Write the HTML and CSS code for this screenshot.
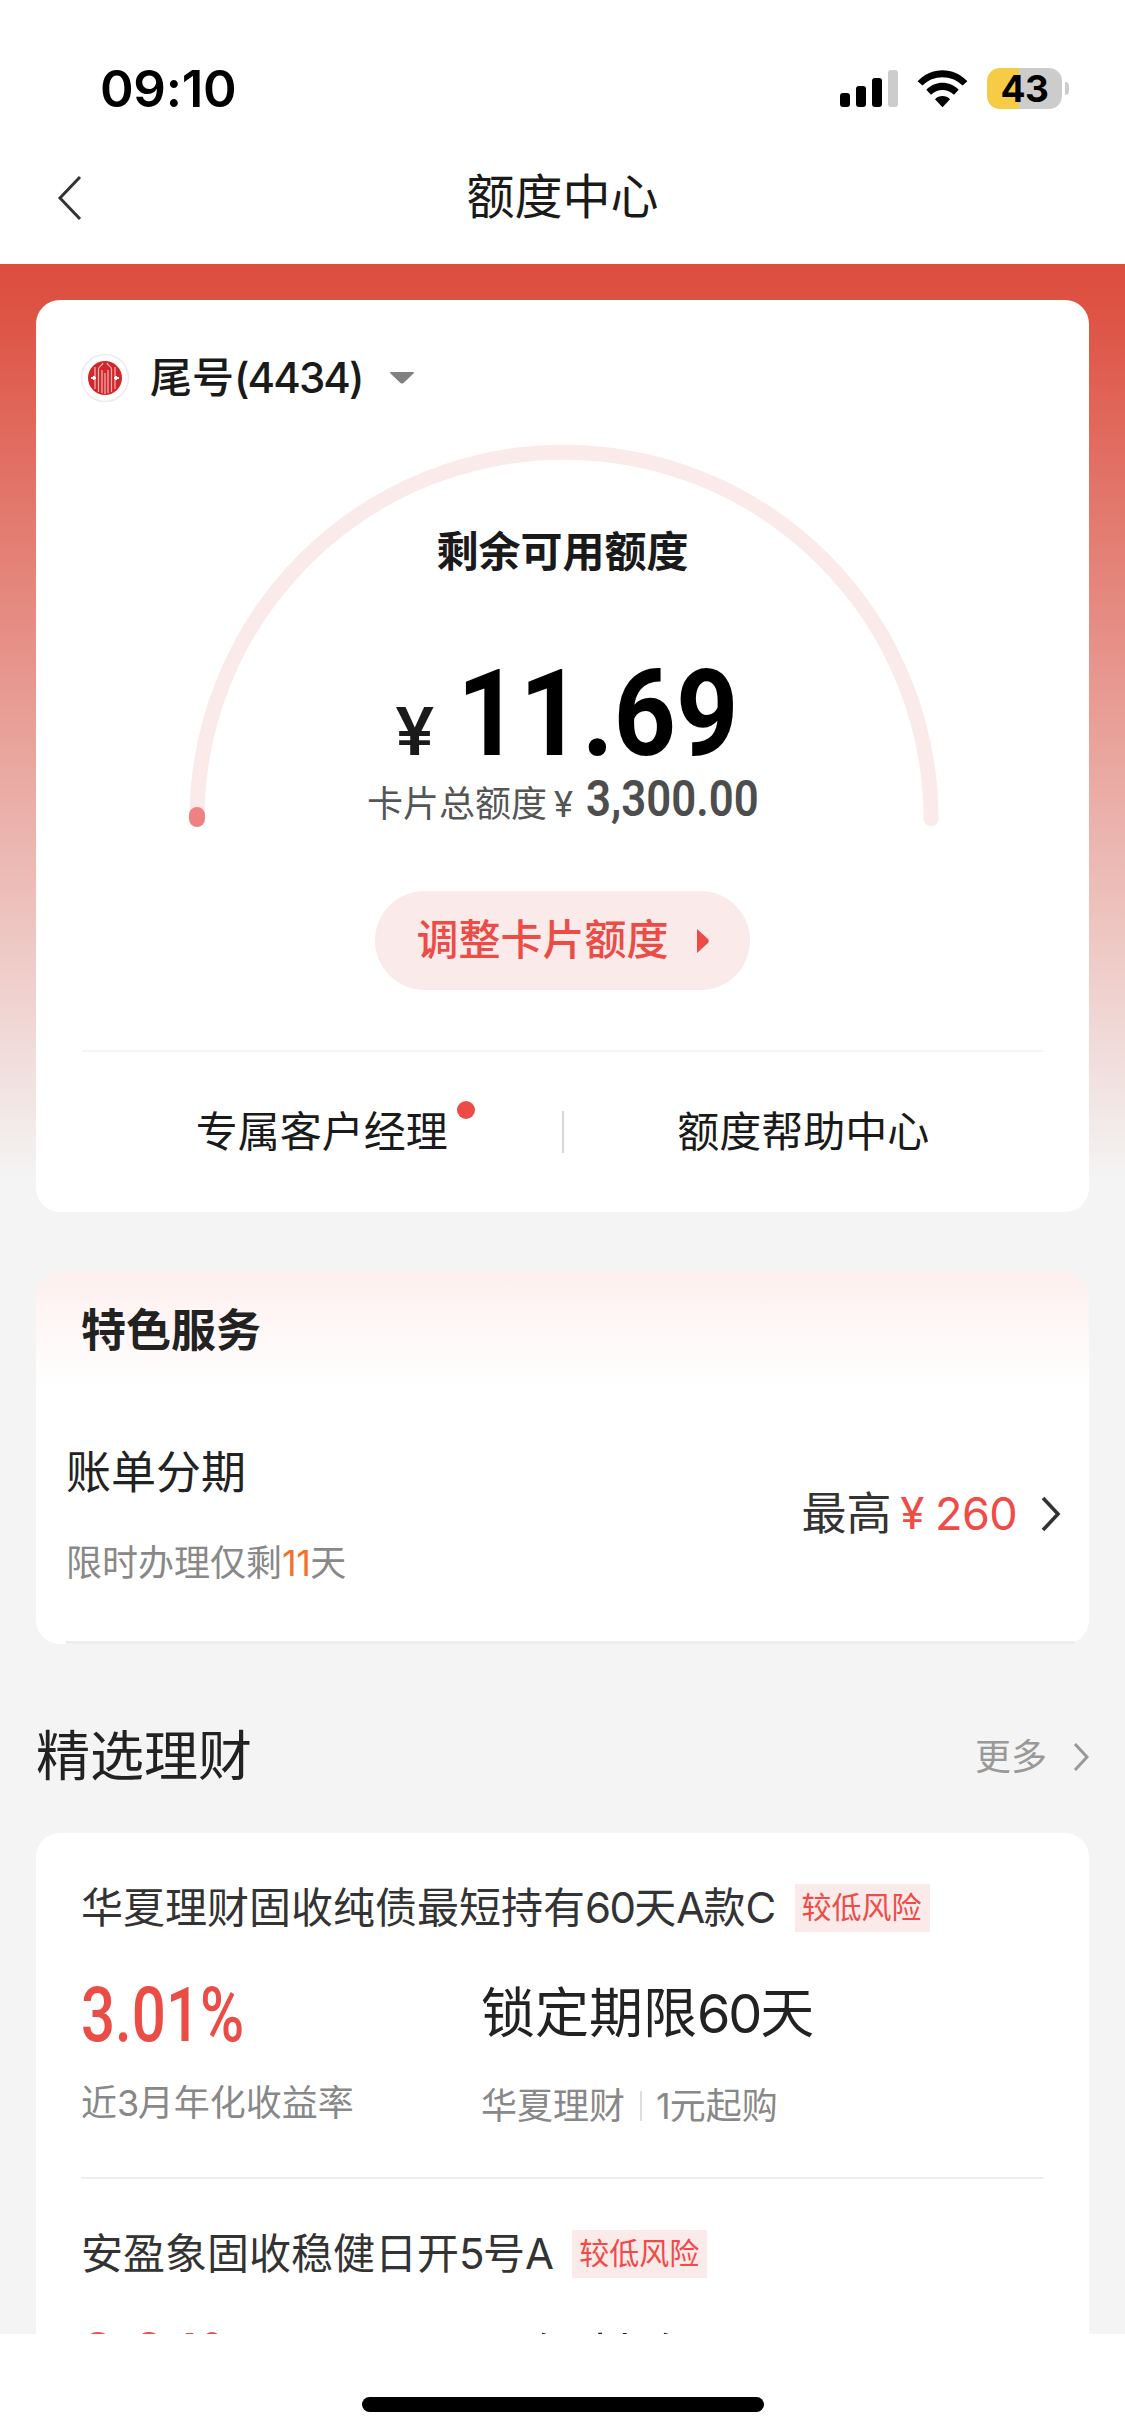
FILE: index.html
```html
<!DOCTYPE html>
<html lang="zh-CN">
<head>
<meta charset="utf-8">
<title>额度中心</title>
<link rel="stylesheet" href="styles.css">
</head>
<body>
<div class="app">
  <div class="status">
    <span class="time">09:10</span>
    <div class="status-icons">
      <svg class="signal" width="58" height="37" viewBox="0 0 58 37">
        <rect x="0" y="23" width="10" height="14" rx="3"/>
        <rect x="16" y="16" width="10" height="21" rx="3"/>
        <rect x="32" y="8" width="10" height="29" rx="3"/>
        <rect x="48" y="0" width="10" height="37" rx="3" fill="#ccc"/>
      </svg>
      <svg class="wifi" width="51" height="38" viewBox="0 0 51 38">
        <path d="M.6 11.2C14.5-3.4 36.500-3.400 50.400 11.200L45.600 15.600C34.500 4.300 16.500 4.300 5.400 15.600Z"/>
        <path d="M9.300 19.800C18.500 10.500 32.500 10.500 41.700 19.800L37 24.800C30.500 18.300 20.500 18.300 14 24.800Z"/>
        <path d="M18 29.200C22 24.800 29 24.800 33 29.200L25.500 37.200Z"/>
      </svg>
      <div class="battery">
        <div class="battery-body">43</div>
        <div class="battery-nub"></div>
      </div>
    </div>
  </div>

  <header class="nav">
    <svg class="back" width="26" height="46" viewBox="0 0 26 46"><path d="M23 2L3 23L23 44" fill="none" stroke="#333" stroke-width="3"/></svg>
    <h1>额度中心</h1>
  </header>

  <main class="page">
    <section class="card quota">
      <div class="account">
        <svg class="bank" width="50" height="50" viewBox="0 0 50 50">
          <circle cx="25" cy="25" r="23.500" fill="#fff" stroke="#ececec" stroke-width="1.500"/>
          <circle cx="25" cy="25" r="17" fill="#d3262b"/>
          <g fill="none" stroke="#f3b5b5" stroke-width="1.200">
            <path d="M18.500 39V16C18.500 13.500 22 13 23 10M31.500 39V16C31.500 13.500 28 13 27 10"/>
            <path d="M22 40V17M28 40V17M25 20V41"/>
            <path d="M15 14V36M35 14V36"/>
          </g>
          <path d="M14 23V27M16 25H11M36 23V27M34 25H39" stroke="#fff" stroke-width="2" fill="none"/>
        </svg>
        <span class="account-name">尾号<span class="account-num">(4434)</span></span>
        <svg class="caret" width="24" height="12" viewBox="0 0 24 12"><path d="M1 0H23Q25 0 23 2L13.500 11Q12 12 10.500 11L1 2Q-1 0 1 0Z" fill="#808080"/></svg>
      </div>

      <div class="gauge">
        <svg class="arc" width="752" height="384" viewBox="0 0 752 384">
          <path d="M9 376A367 367 0 0 1 743 376" fill="none" stroke="#fbeaea" stroke-width="15" stroke-linecap="round"/>
          <rect x="1" y="364" width="16" height="20" rx="8" fill="#ee8283"/>
        </svg>
        <div class="gauge-title">剩余可用额度</div>
        <div class="amount"><span class="yen">¥</span><span class="digits">11.69</span></div>
        <div class="total"><span>卡片总额度</span><span class="total-yen">¥</span><span class="total-num">3,300.00</span></div>
      </div>

      <button class="adjust">调整卡片额度<svg width="12" height="26" viewBox="0 0 12 26"><path d="M0 1L11 11Q12.500 13 11 15L0 25Z" fill="#eb4c46"/></svg></button>

      <div class="links">
        <div class="link"><span class="link-text">专属客户经理<i class="dot"></i></span></div>
        <i class="sep"></i>
        <div class="link"><span class="link-text">额度帮助中心</span></div>
      </div>
    </section>

    <section class="card service">
      <h2>特色服务</h2>
      <div class="bill">
        <div>
          <div class="bill-name">账单分期</div>
          <div class="bill-note">限时办理仅剩<span class="days">11</span>天</div>
        </div>
        <div class="bill-max">最高<span class="bill-yen">¥</span><span class="bill-num">260</span>
          <svg width="20" height="36" viewBox="0 0 20 36"><path d="M2 2L17 18L2 34" fill="none" stroke="#333" stroke-width="3.600"/></svg>
        </div>
      </div>
    </section>

    <div class="section-head">
      <h3>精选理财</h3>
      <div class="more">更多<svg width="17" height="32" viewBox="0 0 17 32"><path d="M3 3L15 16L3 29" fill="none" stroke="#999" stroke-width="3"/></svg></div>
    </div>

    <section class="card products">
      <article class="product">
        <div class="product-head"><span>华夏理财固收纯债最短持有<span class="num">60</span>天<span class="num">A</span>款<span class="num">C</span></span><em class="tag">较低风险</em></div>
        <div class="product-body">
          <div class="rate-col">
            <div class="rate"><span>3.01%</span></div>
            <div class="sub">近<span class="num">3</span>月年化收益率</div>
          </div>
          <div class="term-col">
            <div class="term">锁定期限<span class="num">60</span>天</div>
            <div class="sub sub-pair">华夏理财<i></i><span><span class="one">1</span>元起购</span></div>
          </div>
        </div>
      </article>
      <article class="product">
        <div class="product-head"><span>安盈象固收稳健日开<span class="num">5</span>号<span class="num">A</span></span><em class="tag">较低风险</em></div>
        <div class="product-body">
          <div class="rate-col"><div class="rate"><span>2.04%</span></div></div>
          <div class="term-col"><div class="term">最短持有1天</div></div>
        </div>
      </article>
    </section>
  </main>

  <footer class="home"><div class="home-bar"></div></footer>
</div>
</body>
</html>
```
FILE: styles.css
```css
* { box-sizing: border-box; }

body {
  margin: 0;
  background: #fff;
  color: #1a1a1a;
  font-family: Inter, "Noto Sans CJK SC", sans-serif;
}

h1, h2, h3 { margin: 0; }

svg { display: block; flex: none; }

.app {
  display: flex;
  flex-direction: column;
  width: 1125px;
  height: 2436px;
  overflow: hidden;
}

.num { letter-spacing: -0.04em; }

/* status bar */
.status {
  display: flex;
  justify-content: space-between;
  flex: none;
  height: 132px;
  padding: 68px 56px 0 100px;
}

.time {
  font-size: 51px;
  line-height: 42px;
  font-weight: 600;
  color: #000;
  letter-spacing: -0.3px;
}

.status-icons { display: flex; height: 41px; align-items: center; }
.wifi { margin-left: 19px; }

.battery { display: flex; align-items: center; gap: 3px; margin-left: 19px; }

.battery-body {
  width: 75px;
  height: 41px;
  border-radius: 13px;
  background: linear-gradient(90deg, #f6cb45 32px, #ccc 32px);
  color: #000;
  font-size: 37px;
  font-weight: 700;
  line-height: 41px;
  text-align: center;
  letter-spacing: -0.5px;
}

.battery-nub { width: 4px; height: 13px; border-radius: 0 4px 4px 0; background: #ccc; }

/* navigation */
.nav {
  display: grid;
  grid-template-columns: 1fr auto 1fr;
  align-items: center;
  flex: none;
  height: 132px;
  padding: 0 57px;
}

.nav h1 { font-size: 48px; font-weight: 400; line-height: 58px; margin-bottom: 2px; }

/* scroll area */
.page {
  flex: none;
  height: 2070px;
  overflow: hidden;
  padding: 36px 36px 0;
  background: #f4f4f4 linear-gradient(#dd4e3f 0, #dd5243 40px, #f4f4f4 916px) no-repeat;
}

.card { border-radius: 24px; background: #fff; }

.quota { height: 912px; padding: 0 46px; }

.account { display: flex; align-items: center; height: 144px; padding: 12px 0 0; margin-left: -2px; }
.account-name { margin-left: 20px; font-size: 42px; line-height: 48px; font-weight: 500; }
.account-num { letter-spacing: -1.9px; }
.caret { margin-left: 27px; }

.gauge {
  position: relative;
  display: flex;
  flex-direction: column;
  align-items: center;
  height: 447px;
  padding-top: 84px;
}

.arc { position: absolute; left: 106px; top: -1px; }

.gauge-title { font-size: 42px; line-height: 48px; font-weight: 600; }

.amount {
  display: flex;
  align-items: baseline;
  width: 344px;
  margin-top: 88px;
  height: 100px;
  line-height: 100px;
  font-family: Roboto, sans-serif;
}

.yen { width: 42px; padding-left: 4px; font-size: 66px; font-weight: 500; transform: scaleX(1.1); transform-origin: left; }
.digits { margin-left: 27px; font-size: 121px; font-weight: 700; color: #000; transform: scaleX(.9); transform-origin: left; }

.total {
  display: flex;
  align-items: baseline;
  margin-top: 12px;
  height: 48px;
  line-height: 48px;
  color: #555;
  font-size: 36px;
}

.total-yen { width: 39px; padding-left: 7px; font-family: Roboto, sans-serif; }
.total-num { position: relative; top: -1px; width: 172px; color: #4d4d4d; font-family: Roboto, sans-serif; font-size: 50px; font-weight: 600; transform: scaleX(.875); transform-origin: left; }

.adjust {
  display: flex;
  align-items: center;
  justify-content: center;
  gap: 28px;
  width: 375px;
  height: 99px;
  margin: 0 auto;
  padding: 0 0 2px;
  border: 0;
  border-radius: 50px;
  background: #fbeaea;
  color: #eb4c46;
  font: 500 42px/60px Inter, "Noto Sans CJK SC", sans-serif;
}

.adjust svg { margin-top: 3px; }

.links {
  display: flex;
  align-items: center;
  height: 162px;
  margin-top: 60px;
  border-top: 2px solid #f5f5f5;
}

.link { flex: 1; text-align: center; }
.link-text { position: relative; font-size: 42px; line-height: 60px; }
.dot { position: absolute; right: -27px; top: -5px; width: 18px; height: 18px; border-radius: 50%; background: #eb4c46; }
.sep { width: 2px; height: 42px; background: #d6d6d6; }

/* featured service */
.service {
  height: 372px;
  margin-top: 60px;
  background: linear-gradient(#fdf0ef, #fff 118px);
}

.service h2 { padding: 29px 45px 0; font-size: 45px; line-height: 60px; font-weight: 600; color: #222; }

.bill {
  display: flex;
  align-items: center;
  justify-content: space-between;
  height: 283px;
  margin: 0 14px 0 30px;
  padding-top: 30px;
  border-bottom: 3px solid #ededed;
}

.bill-name { margin-top: 3px; font-size: 45px; line-height: 60px; color: #222; }
.bill-note { margin-top: 30px; font-size: 36px; line-height: 60px; color: #888; }
.days { color: #f3702e; letter-spacing: -0.5px; }

.bill-max { display: flex; align-items: center; margin: -4px 14px 0 0; font-size: 45px; line-height: 60px; color: #333; }
.bill-yen { margin-left: 9px; color: #f04b47; font-family: Roboto, sans-serif; }
.bill-num { margin: 0 24px 0 11px; color: #f04b47; letter-spacing: -0.6px; }

/* section heading */
.section-head { display: flex; align-items: center; justify-content: space-between; height: 189px; padding-top: 37px; }
.section-head h3 { font-size: 54px; line-height: 72px; font-weight: 400; color: #222; }
.more { display: flex; align-items: center; gap: 25px; font-size: 36px; line-height: 48px; color: #999; }

/* products */
.products { height: 900px; padding: 0 46px 0 45px; }
.product { height: 346px; border-bottom: 2px solid #eee; }
.product-head { display: flex; align-items: center; padding-top: 51px; font-size: 42px; line-height: 48px; color: #333; }
.tag { margin-left: 20px; padding: 0 8px 2px 7px; background: #fbeaea; color: #f04b47; font-size: 30px; line-height: 46px; font-style: normal; }

.product-body { display: flex; }
.rate-col { width: 400px; }
.rate { height: 72px; margin-top: 47px; color: #eb4c46; font: 500 76px/72px Roboto, sans-serif; }
.rate span { display: inline-block; transform: scaleX(.79); transform-origin: left; }
.sub { font-size: 36px; line-height: 48px; color: #888; }
.rate-col .sub { margin-top: 28px; }
.term { height: 72px; margin-top: 46px; font-size: 54px; line-height: 72px; color: #222; }
.term-col .sub { margin-top: 32px; }
.sub-pair { display: flex; align-items: center; }
.sub-pair i { width: 2px; height: 30px; margin: 0 14px 0 15px; background: #ddd; }
.one { letter-spacing: -1px; }

/* home indicator */
.home { display: flex; justify-content: center; flex: none; height: 102px; padding-top: 63px; background: #fff; }
.home-bar { width: 402px; height: 15px; border-radius: 8px; background: #000; }
```
